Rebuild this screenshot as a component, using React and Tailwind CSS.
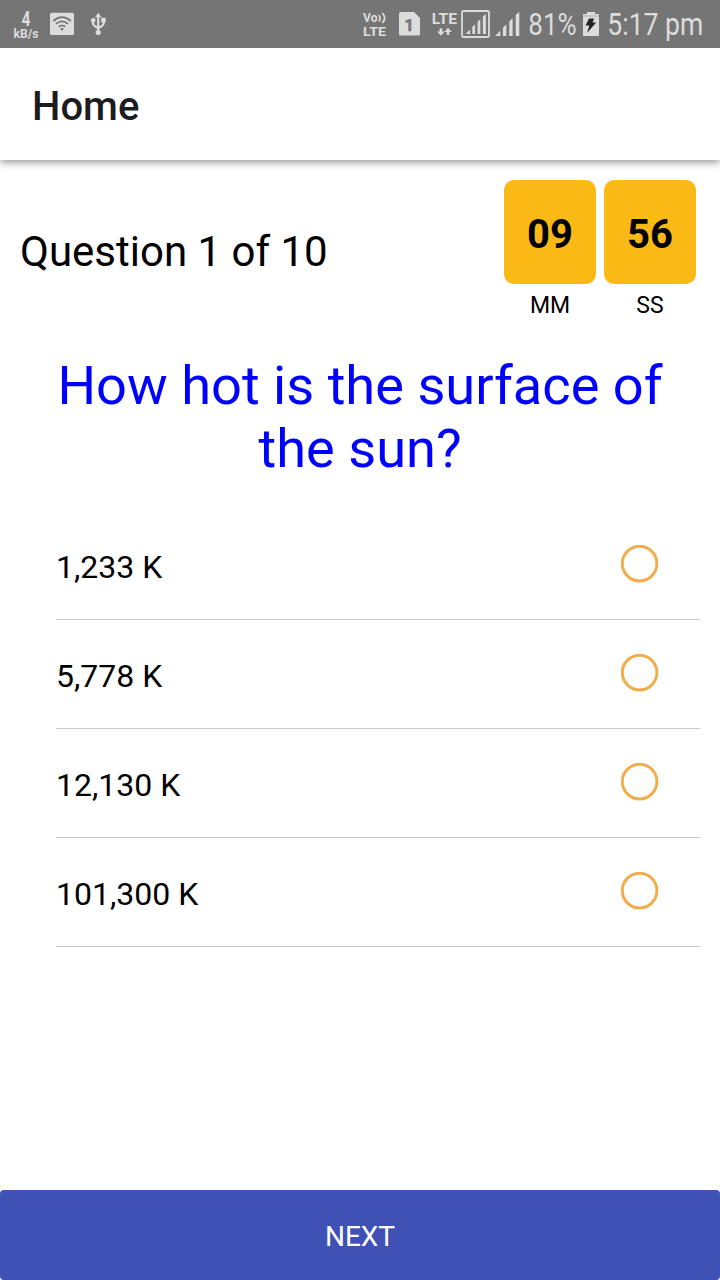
const answers = ["1,233 K", "5,778 K", "12,130 K", "101,300 K"];

function SignalBars() {
  return <path d="M0 24L5.3 18.7V24ZM8 24V15.5L11.3 12.5V24ZM14.3 24V9.3L17.6 6.3V24ZM20.7 24V3L24.3 0V24Z" />;
}

function StatusBar() {
  return (
    <header className="relative z-10 flex h-12 shrink-0 items-center bg-[#757575] pl-[13px] text-[#dcdcdc]">
      <svg width="26" height="48" viewBox="0 0 26 48" fill="currentColor" className="overflow-visible font-bold">
        <text x="8.5" y="26.3" fontSize="19.5" textLength="9" lengthAdjust="spacingAndGlyphs">4</text>
        <text x="0.5" y="37.7" fontSize="12" textLength="25" lengthAdjust="spacingAndGlyphs">kB/s</text>
      </svg>
      <svg width="24" height="48" viewBox="0 0 24 48" className="ml-[11px]">
        <rect y="12.7" width="24" height="22.3" rx="1.5" fill="currentColor" />
        <g fill="none" stroke="#757575" strokeWidth="1.7">
          <path d="M3.2 21Q12 13.4 20.8 21M6 23.9Q12 18.8 18 23.9M8.8 26.7Q12 24.3 15.2 26.7" />
        </g>
        <circle cx="12" cy="29.2" r="1.4" fill="#757575" />
      </svg>
      <svg width="16" height="48" viewBox="0 0 16 48" className="ml-4" fill="none" stroke="currentColor" strokeWidth="2.3">
        <path d="M8.2 16V31M3 21V23.5Q3 25.5 8.2 28M13.6 20V23.5Q13.6 25.5 8.2 28" />
        <path d="M8.2 12.8L11.5 17.3H4.9Z" fill="currentColor" stroke="none" />
        <circle cx="3.2" cy="20.3" r="2.3" fill="currentColor" stroke="none" />
        <rect x="11.2" y="17.8" width="4.5" height="4.5" fill="currentColor" stroke="none" />
        <circle cx="8.2" cy="32.5" r="2.6" fill="currentColor" stroke="none" />
      </svg>
      <svg width="25" height="48" viewBox="0 0 25 48" fill="currentColor" className="ml-[257px] overflow-visible font-bold">
        <text x="0" y="22.3" fontSize="12" textLength="14.5" lengthAdjust="spacingAndGlyphs">Vo</text>
        <path d="M15.8 15.2Q18.6 18.3 15.8 21.5M19.3 13.2Q24 18 19.3 23" fill="none" stroke="currentColor" strokeWidth="1.7" />
        <text x="0" y="35.8" fontSize="13.5" textLength="23" lengthAdjust="spacingAndGlyphs">LTE</text>
      </svg>
      <svg width="21" height="48" viewBox="0 0 21 48" className="ml-[11px] font-bold">
        <path d="M2 12H15L21 18V34Q21 35.5 19.5 35.5H1.5Q0 35.5 0 34V14Q0 12 2 12Z" fill="currentColor" />
        <text x="5.2" y="30.7" fontSize="17" fill="#757575" stroke="#757575" strokeWidth="0.4">1</text>
      </svg>
      <svg width="26" height="48" viewBox="0 0 26 48" fill="currentColor" className="ml-3 overflow-visible font-bold">
        <text x="-0.3" y="24" fontSize="14.7" textLength="25.3" lengthAdjust="spacingAndGlyphs">LTE</text>
        <path d="M7.6 28.3H10.2V31.5H12.7L8.9 35.7L5.1 31.5H7.6ZM12.3 32L16 27.7L19.8 32H17.3V35H14.8V32Z" />
      </svg>
      <svg width="29" height="48" viewBox="0 0 29 48" fill="currentColor" className="ml-[3px]">
        <rect x="1" y="11" width="27" height="26" rx="1.5" fill="none" stroke="currentColor" strokeWidth="1.8" />
        <g transform="translate(4.7 14) scale(.83)"><SignalBars /></g>
      </svg>
      <svg width="25" height="48" viewBox="0 0 25 48" fill="currentColor" className="ml-[5px]">
        <g transform="translate(0 12)"><SignalBars /></g>
      </svg>
      <svg width="49" height="48" viewBox="0 0 49 48" fill="currentColor" className="ml-2 overflow-visible">
        <text x="0.3" y="35.2" fontSize="31" textLength="48.4" lengthAdjust="spacingAndGlyphs">81%</text>
      </svg>
      <svg width="16" height="48" viewBox="0 0 16 48" className="ml-[6px]">
        <path d="M4 12H12V14H16V36H0V14H4Z" fill="currentColor" />
        <path d="M0 15H16V17H0Z" fill="#c3c3c3" />
        <path d="M6 18.5H11.2L9.5 22.5H13.2L4 33L6.4 25.5H2.5Z" fill="#252525" />
      </svg>
      <svg width="97" height="48" viewBox="0 0 97 48" fill="currentColor" className="ml-2 overflow-visible">
        <text x="0.3" y="35.2" fontSize="31" textLength="96" lengthAdjust="spacingAndGlyphs">5:17 pm</text>
      </svg>
    </header>
  );
}

function TimerUnit({ value, label }) {
  return (
    <div className="flex w-[92px] flex-col items-center">
      <div className="flex h-[104px] w-full items-center justify-center rounded-[10px] bg-[#fbb915] pt-1.5 text-[40px] font-bold">{value}</div>
      <div className="mt-1.5 text-[23px] leading-8">{label}</div>
    </div>
  );
}

export default function App() {
  return (
    <div className="flex h-[1280px] w-[720px] flex-col bg-white font-['Roboto',sans-serif] text-black">
      <StatusBar />
      <div className="flex h-28 shrink-0 items-center pl-8 pt-1.5 shadow-[0_2px_8px_rgba(0,0,0,0.45)]">
        <h1 className="text-[40px] font-medium text-[#1c1c1e]">Home</h1>
      </div>
      <div className="flex justify-between pl-5 pr-6 pt-5">
        <p className="mt-[47px] text-[42px] leading-[50px]">Question 1 of 10</p>
        <div className="flex gap-2">
          <TimerUnit value="09" label="MM" />
          <TimerUnit value="56" label="SS" />
        </div>
      </div>
      <h2 className="mt-8 px-5 text-center text-[54.2px] leading-[63px] text-[#0000ff]">
        How hot is the surface of<br />the sun?
      </h2>
      <ul className="ml-14 mr-5 mt-[31px]">
        {answers.map((answer) => (
          <li key={answer} className="flex h-[109px] items-center justify-between border-b border-[#c8c7cc] pr-[41px]">
            <span className="pt-1 text-[32px]">{answer}</span>
            <button aria-label={answer} className="mb-[3px] flex size-[38px]">
              <svg viewBox="0 0 38 38" className="size-full">
                <circle cx="18.6" cy="18.6" r="17.3" fill="none" stroke="#f0ad4e" strokeWidth="3" />
              </svg>
            </button>
          </li>
        ))}
      </ul>
      <button className="mt-auto h-[90px] w-full rounded-[4px] bg-[#3f51b5] pt-1 text-[28px] text-white">NEXT</button>
    </div>
  );
}
